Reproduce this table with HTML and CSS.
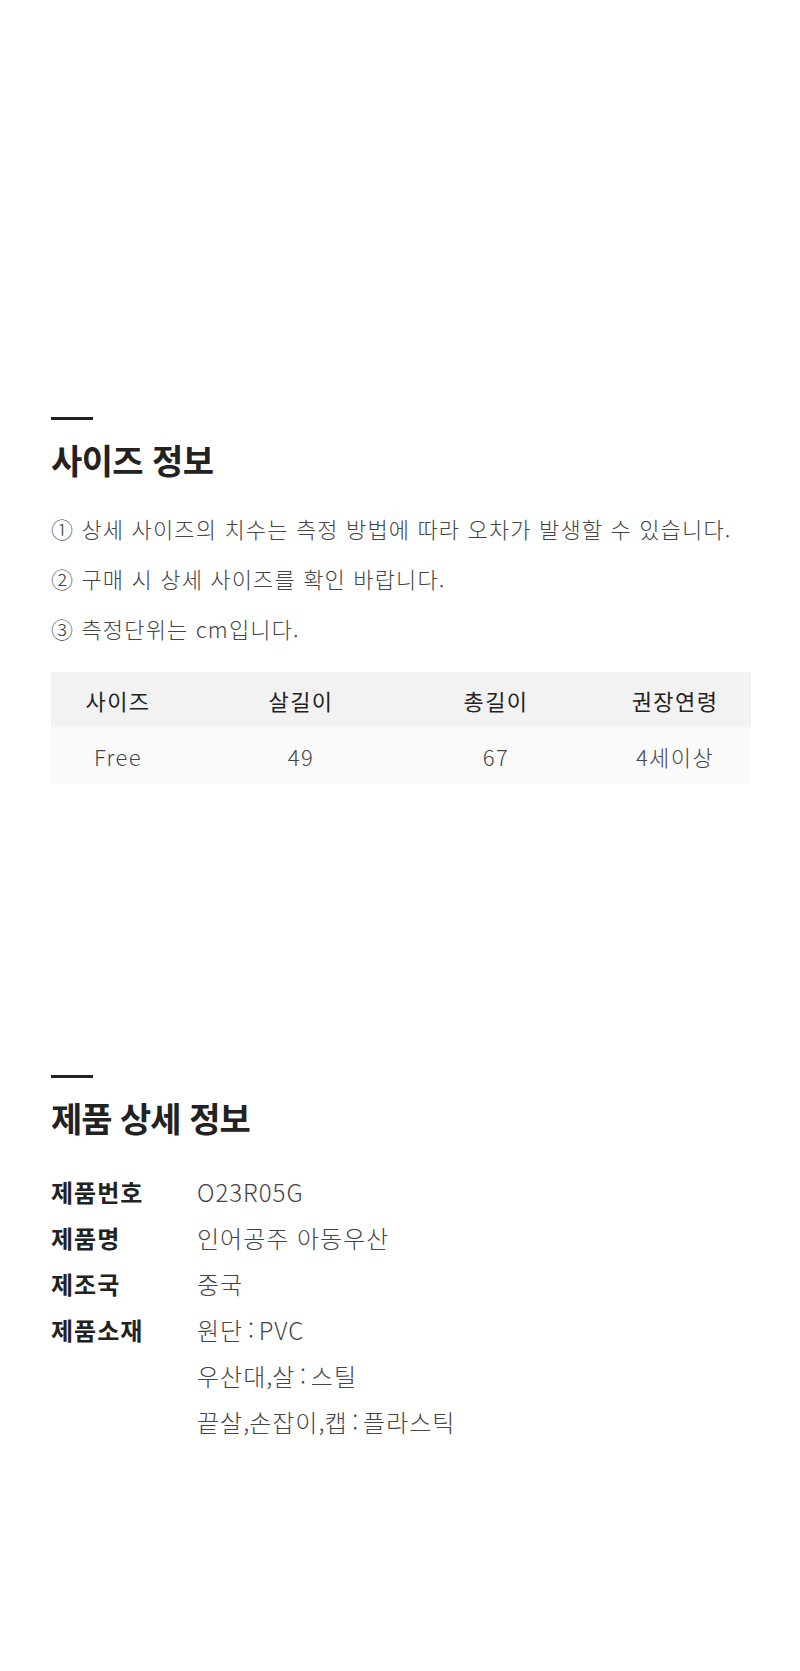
FILE: index.html
```html
<!DOCTYPE html>
<html lang="ko">
<head>
<meta charset="utf-8">
<title>사이즈 정보</title>
<link rel="stylesheet" href="styles.css">
</head>
<body>
<div class="page">
  <section class="section size-section">
    <div class="bar"></div>
    <h2 class="title">사이즈 정보</h2>
    <ul class="notes">
      <li>① 상세 사이즈의 치수는 측정 방법에 따라 오차가 발생할 수 있습니다.</li>
      <li>② 구매 시 상세 사이즈를 확인 바랍니다.</li>
      <li>③ 측정단위는 cm입니다.</li>
    </ul>
    <div class="size-table">
      <div class="row head">
        <div class="cell">사이즈</div>
        <div class="cell">살길이</div>
        <div class="cell">총길이</div>
        <div class="cell last">권장연령</div>
      </div>
      <div class="row body">
        <div class="cell">Free</div>
        <div class="cell">49</div>
        <div class="cell">67</div>
        <div class="cell last">4세이상</div>
      </div>
    </div>
  </section>
  <section class="section detail-section">
    <div class="bar"></div>
    <h2 class="title">제품 상세 정보</h2>
    <dl class="details">
      <div class="drow"><dt>제품번호</dt><dd>O23R05G</dd></div>
      <div class="drow"><dt>제품명</dt><dd>인어공주 아동우산</dd></div>
      <div class="drow"><dt>제조국</dt><dd>중국</dd></div>
      <div class="drow"><dt>제품소재</dt><dd>원단<span class="p"> : </span>PVC<br>우산대<span class="p">,</span>살<span class="p"> : </span>스틸<br>끝살<span class="p">,</span>손잡이<span class="p">,</span>캡<span class="p"> : </span>플라스틱</dd></div>
    </dl>
  </section>
</div>
</body>
</html>
```

FILE: styles.css
```css
html, body {
  margin: 0;
  padding: 0;
  background: #ffffff;
}
body {
  font-family: "Noto Sans CJK KR", "Noto Sans", sans-serif;
  color: #333333;
}
.page {
  width: 800px;
  height: 1671px;
  padding: 0 49px 0 51px;
  box-sizing: border-box;
}
.section {
  display: flex;
  flex-direction: column;
}
.size-section {
  padding-top: 417px;
}
.detail-section {
  padding-top: 291px;
}
.bar {
  width: 42px;
  height: 3px;
  background: #222222;
}
.title {
  margin: 20px 0 0 0;
  font-size: 34px;
  line-height: 40px;
  font-weight: 700;
  color: #222222;
  letter-spacing: -0.6px;
}
.detail-section .title {
  letter-spacing: -1px;
}
.notes {
  list-style: none;
  margin: 23px 0 0 0;
  padding: 0;
  font-size: 22px;
  line-height: 50px;
  font-weight: 300;
  color: #444444;
  letter-spacing: 1.15px;
}
.size-table {
  margin-top: 19px;
  display: flex;
  flex-direction: column;
}
.row {
  display: grid;
  grid-template-columns: 134px 232px 158px 176px;
  align-items: center;
  font-size: 22px;
  letter-spacing: 1.4px;
}
.row.head {
  height: 55px;
  background: #f2f2f2;
  font-weight: 400;
  color: #222222;
}
.row.body {
  height: 57px;
  background: #fafafa;
  font-weight: 300;
  color: #444444;
}
.cell {
  text-align: center;
}
.cell.last {
  padding-left: 24px;
}
.details {
  margin: 31px 0 0 0;
  display: flex;
  flex-direction: column;
  font-size: 24px;
  line-height: 46px;
  letter-spacing: 1px;
}
.drow {
  display: flex;
}
.drow dt {
  width: 146px;
  flex: none;
  font-weight: 700;
  color: #222222;
}
.drow dd {
  margin: 0;
  font-weight: 300;
  color: #444444;
}
.p {
  letter-spacing: 0;
  word-spacing: -2px;
}
```
